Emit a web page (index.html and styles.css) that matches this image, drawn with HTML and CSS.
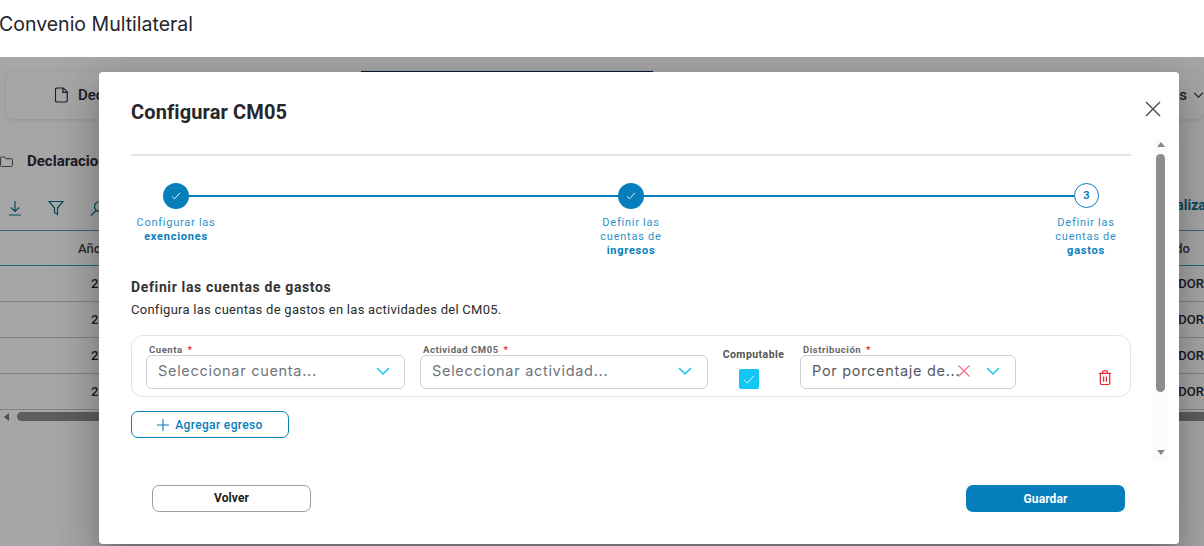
FILE: index.html
```html
<!DOCTYPE html>
<html lang="es">
<head>
<meta charset="utf-8">
<title>Convenio Multilateral</title>
<link rel="stylesheet" href="styles.css">
</head>
<body>
<header class="app-header"><h1>Convenio Multilateral</h1></header>
<main class="page">
  <nav class="tabs">
    <div class="tab tab-first">
      <svg class="ic" viewBox="0 0 16 18" width="14" height="16"><path d="M2.5 1h7l4.500 4.500V15a2 2 0 0 1-2 2h-9.500a2 2 0 0 1-2-2V3a2 2 0 0 1 2-2z M9 1v5h5" fill="none" stroke="currentColor" stroke-width="1.400"/></svg>
      <span>Declaraciones</span>
    </div>
    <div class="tab-active"></div>
    <div class="tab-last"><span>Declaraciones</span>
      <svg viewBox="0 0 12 8" width="11" height="7"><path d="M1 1l5 5 5-5" fill="none" stroke="currentColor" stroke-width="1.300"/></svg>
    </div>
  </nav>
  <div class="folder-title">
    <svg viewBox="0 0 14 12" width="13" height="11"><path d="M.5 2a1 1 0 0 1 1-1h3.500l1.500 2h6a1 1 0 0 1 1 1v6.500a1 1 0 0 1-1 1h-11a1 1 0 0 1-1-1z" fill="none" stroke="currentColor"/></svg>
    <strong>Declaraciones</strong>
  </div>
  <div class="toolbar">
    <div class="tool-icons">
      <svg viewBox="0 0 14 16" width="14" height="16"><path d="M7 1v10M3 7.500l4 4 4-4M1 15h12" fill="none" stroke="currentColor" stroke-width="1.200"/></svg>
      <svg viewBox="0 0 16 16" width="16" height="16"><path d="M1 1.500h14L9.500 8v6.500l-3-2V8z" fill="none" stroke="currentColor" stroke-width="1.200"/></svg>
      <svg viewBox="0 0 16 16" width="16" height="16"><circle cx="9.500" cy="6.500" r="5" fill="none" stroke="currentColor" stroke-width="1.200"/><path d="M6 10.500l-5 5" stroke="currentColor" stroke-width="1.200"/></svg>
    </div>
    <span class="tool-action">Actualizar</span>
  </div>
  <div class="grid-head"><span>Año</span><span class="head-right">Estado</span></div>
  <div class="grid-row"><span>2023</span><span>BORRADOR</span></div>
  <div class="grid-row"><span>2023</span><span>BORRADOR</span></div>
  <div class="grid-row"><span>2023</span><span>BORRADOR</span></div>
  <div class="grid-row"><span>2023</span><span>BORRADOR</span></div>
  <div class="h-scroll"><i class="h-arrow"></i><i class="h-thumb"></i></div>
</main>

<div class="overlay">
  <section class="modal">
    <div class="modal-head">
      <h2>Configurar CM05</h2>
    </div>
    <button class="close" aria-label="Cerrar">
      <svg viewBox="0 0 16 16" width="16" height="16"><path d="M1 1l14 14M15 1L1 15" stroke="currentColor" stroke-width="1.500" fill="none"/></svg>
    </button>
    <div class="stepper">
      <div class="step">
        <span class="dot"><svg viewBox="0 0 12 10" width="10" height="8"><path d="M1 5.500l3.200 3L11 1" fill="none" stroke="#fff" stroke-width="1.100"/></svg></span>
        <p>Configurar las <b>exenciones</b></p>
      </div>
      <div class="step">
        <span class="dot"><svg viewBox="0 0 12 10" width="10" height="8"><path d="M1 5.500l3.200 3L11 1" fill="none" stroke="#fff" stroke-width="1.100"/></svg></span>
        <p>Definir las cuentas de <b>ingresos</b></p>
      </div>
      <div class="step">
        <span class="dot dot-current">3</span>
        <p>Definir las cuentas de <b>gastos</b></p>
      </div>
    </div>
    <h3>Definir las cuentas de gastos</h3>
    <p class="lead">Configura las cuentas de gastos en las actividades del CM05.</p>

    <div class="row-card">
      <div class="field f-cuenta">
        <label>Cuenta <em>*</em></label>
        <div class="select"><span class="ph">Seleccionar cuenta...</span>
          <svg class="chev" viewBox="0 0 14 9" width="14" height="9"><path d="M1 1l6 6 6-6" fill="none" stroke="#14c4f5" stroke-width="1.500"/></svg>
        </div>
      </div>
      <div class="field f-actividad">
        <label>Actividad CM05 <em>*</em></label>
        <div class="select"><span class="ph">Seleccionar actividad...</span>
          <svg class="chev chev-a" viewBox="0 0 14 9" width="14" height="9"><path d="M1 1l6 6 6-6" fill="none" stroke="#14c4f5" stroke-width="1.500"/></svg>
        </div>
      </div>
      <div class="computable">
        <label>Computable</label>
        <span class="check"><svg viewBox="0 0 14 11" width="12" height="9"><path d="M1 6l4 4 8-9" fill="none" stroke="#fff" stroke-width="1.100"/></svg></span>
      </div>
      <div class="field f-dist">
        <label>Distribución <em>*</em></label>
        <div class="select"><span class="val">Por porcentaje de...</span>
          <svg class="clear" viewBox="0 0 12 12" width="12" height="12"><path d="M.5.500l11 11M11.500.500l-11 11" stroke="#f5708f" stroke-width="1.300" fill="none"/></svg>
          <svg class="chev chev-d" viewBox="0 0 14 9" width="14" height="9"><path d="M1 1l6 6 6-6" fill="none" stroke="#14c4f5" stroke-width="1.500"/></svg>
        </div>
      </div>
      <svg class="trash" viewBox="0 0 14 16" width="14" height="15"><path d="M.5 3.500h13M4.500 3.500V2a1 1 0 0 1 1-1h3a1 1 0 0 1 1 1v1.500M2 3.500V14a1.500 1.500 0 0 0 1.500 1.500h7A1.500 1.500 0 0 0 12 14V3.500M5.500 7v5.500M8.500 7v5.500" fill="none" stroke="#e6262c" stroke-width="1.300"/></svg>
    </div>

    <button class="add">
      <svg viewBox="0 0 12 12" width="12" height="12"><path d="M6 0v12M0 6h12" stroke="currentColor" stroke-width="1.100"/></svg>
      Agregar egreso
    </button>

    <div class="v-scroll">
      <i class="arrow-up"></i>
      <i class="v-thumb"></i>
      <i class="arrow-down"></i>
    </div>

    <footer class="modal-foot">
      <button class="btn-back">Volver</button>
      <button class="btn-save">Guardar</button>
    </footer>
  </section>
</div>
</body>
</html>
```

FILE: styles.css
```css
* { box-sizing: border-box; }
html, body { margin: 0; height: 546px; overflow: hidden; }
body { background: #fff; font-family: Roboto, "Liberation Sans", sans-serif; color: #2c2c38; position: relative; }

.app-header { height: 57px; background: #fff; position: relative; z-index: 2; display: flex; align-items: center; }
.app-header h1 { margin: -8px 0 0 -1px; font: 400 19.500px/1 Inter, "Noto Sans", sans-serif; color: #24242c; }

.page { height: 489px; background: #fff; position: relative; overflow: hidden; }
.tabs { display: flex; margin: 14px 0 0 6px; height: 48px; background: #fff; border-radius: 8px; box-shadow: 0 1px 4px rgba(0,0,0,.12); align-items: center; font-size: 15px; font-weight: 500; overflow: hidden; position: relative; }
.tab { display: flex; align-items: center; gap: 9px; }
.tab-first { margin-left: 49px; width: 306px; align-self: center; }
.tab-active { width: 292px; align-self: flex-start; height: 2px; background: #0c2a50; }
.tab-last { margin-left: auto; display: flex; align-items: center; gap: 6px; color: #333; }
.ic { display: block; }
.folder-title { display: flex; align-items: center; gap: 14px; margin-top: 33px; height: 18px; font-size: 15px; }
.folder-title svg { margin-left: 0; color: #444; }
.toolbar { display: flex; justify-content: space-between; align-items: center; margin-top: 24px; height: 28px; color: #0f6f8f; }
.tool-icons { display: flex; gap: 26px; padding-left: 8px; align-items: center; }
.tool-action { font-weight: 700; font-size: 14px; margin: 0 -7px 6px 0; }
.grid-head { display: flex; justify-content: space-between; align-items: center; height: 36px; margin-top: 8px; border-top: 1px solid #4d9fc0; border-bottom: 1px solid #2ba0c4; padding-left: 78px; font-size: 13px; font-weight: 500; color: #444; }
.head-right { margin-right: 14px; }
.grid-row { display: flex; justify-content: space-between; align-items: center; height: 36px; padding-left: 91px; border-bottom: 1px solid #c9c9c9; font-size: 13px; font-weight: 500; }
.h-scroll { display: flex; align-items: center; height: 9px; margin-top: 2px; gap: 8px; padding-left: 4px; }
.h-arrow { width: 0; height: 0; border: 4px solid transparent; border-right: 5px solid #777; border-left: 0; }
.h-thumb { flex: 1; height: 9px; background: #8f8f8f; border-radius: 5px 0 0 5px; }

.overlay { position: absolute; left: 0; right: 0; top: 57px; bottom: 0; background: rgba(0,0,0,.35); overflow: hidden; z-index: 1; }
.modal { position: absolute; left: 99px; top: 15px; width: 1080px; height: 472px; background: #fff; border-radius: 4px; padding: 0 48px 0 32px; box-shadow: 0 11px 15px -7px rgba(0,0,0,.2), 0 24px 38px 3px rgba(0,0,0,.14), 0 9px 46px 8px rgba(0,0,0,.12); }
.modal-head { height: 84px; border-bottom: 2px solid #e2e2e2; padding-top: 28px; }
.modal-head h2 { margin: 0; font: 700 20px/24px Roboto, sans-serif; letter-spacing: .13px; color: #26262b; }
.close { position: absolute; right: 18px; top: 29px; border: 0; background: none; padding: 0; color: #555; line-height: 0; }

.stepper { display: flex; justify-content: space-between; position: relative; margin-top: 27px; }
.stepper::before { content: ""; position: absolute; left: 45px; right: 45px; top: 12px; height: 2px; background: #057ebb; }
.step { width: 90px; display: flex; flex-direction: column; align-items: center; position: relative; }
.dot { width: 26px; height: 26px; border-radius: 50%; background: #057ebb; display: flex; align-items: center; justify-content: center; }
.dot-current { width: 25px; height: 25px; margin: 0 0 1px 1px; background: #fff; border: 1px solid #057ebb; color: #057ebb; font-size: 11px; font-weight: 700; }
.step p { margin: 7px 0 0; width: 88px; text-align: center; font-size: 11px; line-height: 14px; letter-spacing: .75px; color: #2d91c6; }
.step b { display: block; color: #057ebb; font-weight: 700; }

h3 { margin: 20px 0 0; font: 700 14px/18px Roboto, sans-serif; letter-spacing: .63px; color: #333; }
.lead { margin: 5px 0 0; font-size: 13px; line-height: 18px; letter-spacing: .27px; color: #2b2b2b; }

.row-card { position: relative; display: flex; align-items: flex-start; height: 62px; margin-top: 16px; padding: 6px 0 0 14px; border: 1px solid #e1e4e9; border-radius: 12px; }
.field { display: flex; flex-direction: column; }
.field label { font-size: 9.500px; line-height: 11px; padding-top: 2px; font-weight: 700; letter-spacing: .55px; color: #666; padding-left: 3px; }
.field em { color: #f01c1c; font-style: normal; margin-left: 2px; }
.f-cuenta { width: 259px; margin-right: 15px; }
.f-actividad { width: 288px; margin-right: 14px; }
.f-dist { width: 216px; margin-left: 15px; }
.select { height: 34px; border: 1px solid #ccd0da; border-radius: 6px; display: flex; align-items: center; padding: 0 0 2px 11px; font: 400 14.500px/1 Inter, "Noto Sans", sans-serif; letter-spacing: .7px; background: #fff; }
.ph { color: #6f747c; }
.val { color: #555a61; white-space: nowrap; }
.chev { margin-left: auto; margin-right: 14px; }
.chev-a { margin-right: 15px; }
.clear { position: absolute; left: 826px; top: 29px; }
.chev-d { margin-right: 15px; }
.computable { width: 63px; display: flex; flex-direction: column; align-items: center; }
.computable label { font-size: 10.500px; font-weight: 700; letter-spacing: .45px; color: #555; line-height: 14px; padding-top: 6px; white-space: nowrap; }
.check { width: 20px; height: 20px; margin: 7px 0 0 -10px; background: #12c6f6; border-radius: 2px; display: flex; align-items: center; justify-content: center; }
.trash { position: absolute; left: 966px; top: 34px; }

.add { display: flex; align-items: center; justify-content: center; gap: 6px; width: 158px; height: 27px; margin-top: 14px; background: #fff; border: 1px solid #057ebb; border-radius: 7px; color: #057ebb; font: 500 12px/1 Roboto, sans-serif; letter-spacing: .35px; padding: 0; }

.v-scroll { position: absolute; right: 11px; top: 65px; width: 15px; height: 325px; background: #fbfbfb; display: flex; flex-direction: column; align-items: center; }
.arrow-up { margin-top: 5px; border: 4.500px solid transparent; border-top: 0; border-bottom: 5px solid #888; }
.v-thumb { width: 9px; height: 238px; margin-top: 7px; background: #8c8c8c; border-radius: 5px; }
.arrow-down { margin-top: auto; margin-bottom: 7px; border: 4.500px solid transparent; border-bottom: 0; border-top: 5px solid #888; }

.modal-foot { display: flex; justify-content: space-between; margin-top: 47px; padding: 0 6px 0 21px; }
.btn-back, .btn-save { width: 159px; height: 27px; border-radius: 7px; font: 700 12px/1 Roboto, sans-serif; letter-spacing: .1px; padding: 0; }
.btn-back { background: #fff; border: 1px solid #9c9cab; color: #1c1c20; padding-bottom: 2px; }
.btn-save { background: #057ebb; border: 0; color: #fff; }
```
